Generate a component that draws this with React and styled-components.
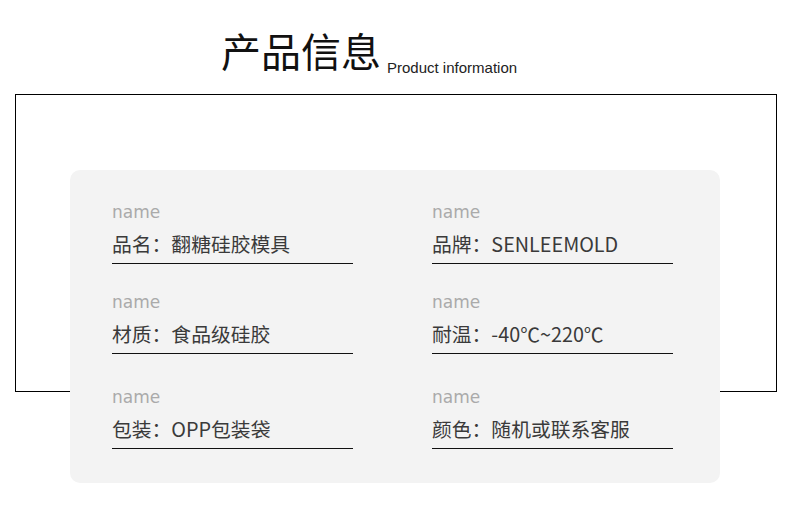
import React from "react";
import styled, { createGlobalStyle } from "styled-components";

const Global = createGlobalStyle`
  html, body { margin: 0; padding: 0; background: #fff; }
  body { font-family: "Noto Sans CJK SC", "Noto Sans", sans-serif; }
`;

const Page = styled.div`
  width: 790px;
  height: 531px;
  overflow: hidden;
  padding-top: 22px;
  box-sizing: border-box;
`;

const Header = styled.div`
  display: flex;
  align-items: flex-end;
  padding-left: 221px;
  height: 56px;
`;

const Title = styled.h1`
  margin: 0;
  font-family: "Noto Sans CJK SC", sans-serif;
  font-weight: 400;
  font-size: 40px;
  line-height: 56px;
  color: #111;
`;

const Subtitle = styled.span`
  margin-left: 6px;
  padding-bottom: 2px;
  font-family: "Liberation Sans", sans-serif;
  font-size: 15px;
  line-height: 17px;
  color: #222;
`;

const Frame = styled.div`
  margin: 16px 0 0 15px;
  width: 762px;
  height: 298px;
  box-sizing: border-box;
  border: 1px solid #000;
  padding: 75px 0 0 54px;
`;

const Card = styled.div`
  width: 650px;
  height: 313px;
  box-sizing: border-box;
  background: #f3f3f3;
  border-radius: 10px;
  padding: 31px 0 0 42px;
  display: grid;
  grid-template-columns: 241px 241px;
  column-gap: 79px;
  grid-auto-rows: 90px;
`;

const Item = styled.div`
  display: flex;
  flex-direction: column;
  margin-top: ${(p) => (p.$shift ? "5px" : "0")};
`;

const Label = styled.div`
  font-family: "DejaVu Sans", sans-serif;
  font-size: 17px;
  line-height: 22px;
  color: #aaa;
`;

const Value = styled.div`
  font-family: "Noto Sans CJK SC", sans-serif;
  font-size: 19.8px;
  line-height: 28px;
  margin-top: 7px;
  padding-bottom: 5px;
  color: #3a3a3a;
  border-bottom: 1.5px solid #111;
  white-space: nowrap;
`;

const items = [
  "品名：翻糖硅胶模具",
  "品牌：SENLEEMOLD",
  "材质：食品级硅胶",
  "耐温：-40℃~220℃",
  "包装：OPP包装袋",
  "颜色：随机或联系客服",
];

export default function App() {
  return (
    <>
      <Global />
      <Page>
        <Header>
          <Title>产品信息</Title>
          <Subtitle>Product information</Subtitle>
        </Header>
        <Frame>
          <Card>
            {items.map((t, i) => (
              <Item key={i} $shift={i >= 4}>
                <Label>name</Label>
                <Value>{t}</Value>
              </Item>
            ))}
          </Card>
        </Frame>
      </Page>
    </>
  );
}
